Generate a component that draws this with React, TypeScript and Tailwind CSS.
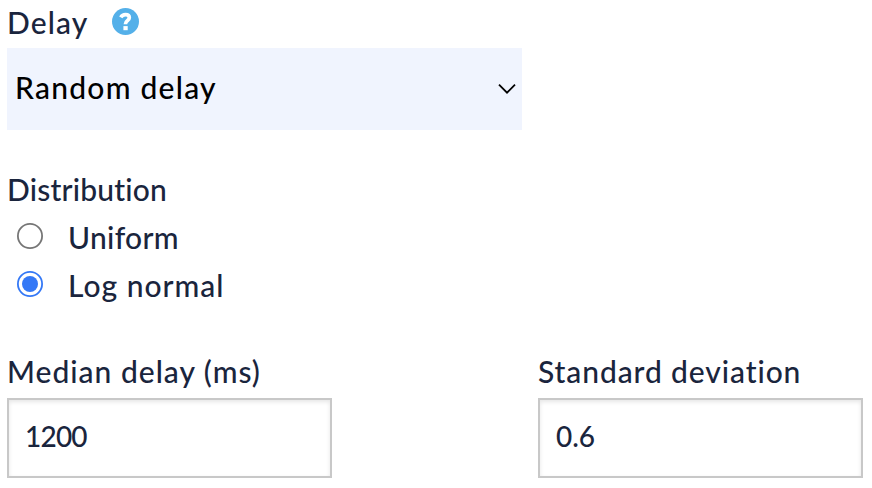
function HelpIcon() {
  return (
    <svg className="mt-[8px] h-[27px] w-[27px]" viewBox="0 0 27 27" fill="none">
      <circle cx="13.5" cy="13.5" r="13.5" fill="#54b0e9" />
      <path d="M8.8 9.3C9.8 7.5 11.4 6.6 13.5 6.6C15.9 6.6 17.3 7.9 17.3 9.7C17.3 12.7 13.4 12.2 13.4 16.2" stroke="#fff" strokeWidth="3.7" />
      <path d="M11.4 18.1H15.7V22.2H11.4Z" fill="#fff" />
    </svg>
  );
}

function Radio({ label, checked, spacing }: { label: string; checked?: boolean; spacing: string }) {
  return (
    <label className="flex h-12 items-start">
      <svg className="ml-[10px] mt-[10px] h-[26px] w-[26px] shrink-0" viewBox="0 0 26 26">
        <circle cx="13" cy="13" r="12.1" fill="#fff" stroke={checked ? "#3478f6" : "#767676"} strokeWidth="1.8" />
        {checked && <circle cx="13" cy="13" r="8" fill="#3478f6" />}
      </svg>
      <span className={`ml-[25px] leading-[48px] ${spacing}`}>{label}</span>
    </label>
  );
}

function Field({ label, value, spacing, valueSpacing }: { label: string; value: string; spacing: string; valueSpacing: string }) {
  return (
    <div className="w-[325px]">
      <div className={`h-[49px] whitespace-nowrap leading-[44px] ${spacing}`}>{label}</div>
      <div className={`h-[80px] border-2 border-[#c8c8c8] bg-white pl-[16px] text-[28px] leading-[72px] shadow-[inset_0_2px_4px_rgba(0,0,0,0.1)] ${valueSpacing}`}>
        {value}
      </div>
    </div>
  );
}

export default function App() {
  return (
    <main className="h-[488px] w-[872px] overflow-hidden bg-white pl-[7px] font-['Lato',sans-serif] text-[30px] font-medium text-[#1a253d]">
      <div className="flex h-12 items-start">
        <span className="w-[105px] leading-[44px] tracking-[1.1px]">Delay</span>
        <HelpIcon />
      </div>
      <div className="flex h-[82px] w-[515px] items-start justify-between bg-[#f0f4fe] pl-[8px] pr-[6px] text-black">
        <span className="leading-[79px] tracking-[1.25px]">Random delay</span>
        <svg className="mt-[35px] h-[12px] w-[18px]" viewBox="0 0 18 12" fill="none" stroke="#000" strokeWidth="1.8">
          <path d="M1 1.7L9 9.7L17 1.7" />
        </svg>
      </div>
      <div className="mt-[37px] h-[46px] leading-[44px] tracking-[0.2px]">Distribution</div>
      <Radio label="Uniform" spacing="tracking-[0.3px]" />
      <Radio label="Log normal" checked spacing="tracking-[1px]" />
      <div className="mt-[40px] flex gap-[206px]">
        <Field label="Median delay (ms)" value="1200" spacing="tracking-[1px]" valueSpacing="tracking-[-0.8px]" />
        <Field label="Standard deviation" value="0.6" spacing="tracking-[0.9px]" valueSpacing="tracking-[0px]" />
      </div>
    </main>
  );
}
